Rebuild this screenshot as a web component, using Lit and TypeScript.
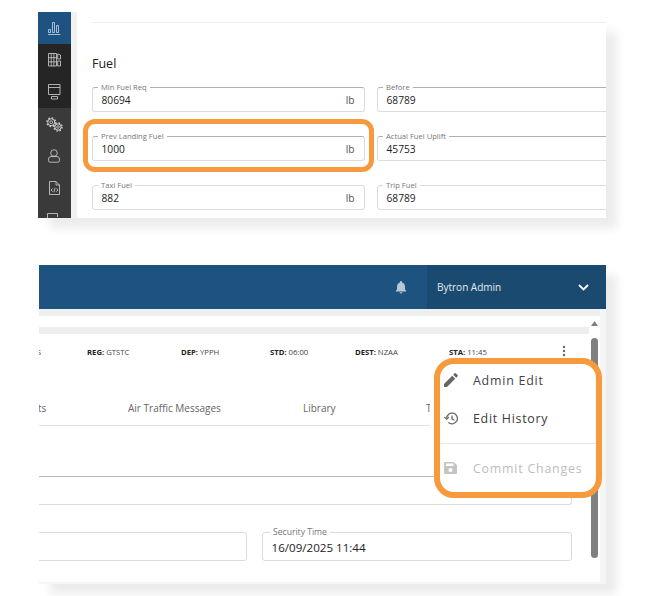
import { LitElement, html, css, svg } from "lit";
import { customElement } from "lit/decorators.js";

const ic = (w: number, h: number, body: unknown) =>
  html`<svg width=${w} height=${h} viewBox="0 0 ${w} ${h}" fill="none" stroke="currentColor" stroke-width=".8">${body}</svg>`;

const icons = {
  chart: ic(14, 14, svg`<path d="M1 13.5h12.5M1.5 11.5V8.5h2v3zM5.5 11.5V1.5h2v10zM9.5 11.5V4.5h2v7z"/>`),
  grid: ic(13, 14, svg`<path d="M.5.5h8v12.5h-8zM.5 4.7h8M.5 8.9h8M3.2.5V13M5.9.5V13M9.7 1l2.8 1v4H9.7zM9.7 8h2.8v5H9.7z"/>`),
  layout: ic(13, 16, svg`<path d="M.5.5h11.5v10H.5zM.5 3.5h11.5M3.5 12.5h6v2.5h-6z"/>`),
  gears: ic(17, 15, svg`<circle cx="5.2" cy="5.2" r="3.5" stroke-width="1"/><circle cx="5.2" cy="5.2" r="4.4" stroke-width="1.2" stroke-dasharray="1.7 1.75"/><circle cx="5.2" cy="5.2" r="1.4"/><circle cx="12" cy="10" r="3.2" stroke-width="1"/><circle cx="12" cy="10" r="4.1" stroke-width="1.2" stroke-dasharray="1.6 1.62"/><circle cx="12" cy="10" r="1.3"/>`),
  user: ic(12, 14, svg`<circle cx="6" cy="4" r="3.3"/><path d="M3 7.6H9a2.4 2.4 0 012.4 2.4v1.6a1.5 1.5 0 01-1.5 1.6H2.1a1.5 1.5 0 01-1.5-1.6V10A2.4 2.4 0 013 7.6z"/>`),
  code: ic(11, 14, svg`<path d="M.5.5h6.5l3.5 3.5v9.5H.5zM7 .5V4h3.5"/><path d="M3.6 7.4L2 9l1.6 1.6M7.4 7.4L9 9l-1.6 1.6M6 6.8L5 11.2" stroke-width=".8"/>`),
  doc: ic(14, 14, svg`<path d="M.5 12V.5h10V4M5 5.5h8.5v8H5z"/>`),
  bell: html`<svg width="12" height="13" viewBox="0 0 12 13" fill="#b9c6d4"><path d="M6 0a1 1 0 011 1v.6c2 .5 3 2.1 3 4.2v2.6l1.2 1.3v.7H.8v-.7L2 8.4V5.8c0-2.1 1-3.7 3-4.2V1a1 1 0 011-1zM4.6 11.2h2.8a1.4 1.4 0 01-2.8 0z"/></svg>`,
  chevron: html`<svg width="11" height="7" viewBox="0 0 11 7" fill="none" stroke="#fff" stroke-width="1.8"><path d="M1 1l4.5 4.5L10 1"/></svg>`,
  kebab: html`<svg width="4" height="12" viewBox="0 0 4 12" fill="#666"><circle cx="2" cy="2" r="1.2"/><circle cx="2" cy="6" r="1.2"/><circle cx="2" cy="10" r="1.2"/></svg>`,
  pencil: html`<svg width="14" height="14" viewBox="0 0 14 14" fill="#666"><path d="M0 11v3h3l8.2-8.2-3-3zM13.7 3.3a.8.8 0 000-1.1L11.8.3a.8.8 0 00-1.1 0L9.2 1.8l3 3z"/></svg>`,
  history: html`<svg width="15" height="13" viewBox="0 0 15 13" fill="none" stroke="#666" stroke-width="1.3"><path d="M2.6 6.5a5.4 5.4 0 111.7 3.9"/><path d="M.4 5l2.2 2.3L4.9 5" stroke-width="1.1"/><path d="M8 3.6v3.2l2.4 1.4"/></svg>`,
  save: html`<svg width="13" height="12" viewBox="0 0 13 12" fill="#c4c4c4"><path d="M0 1a1 1 0 011-1h8.6L13 3v8a1 1 0 01-1 1H1a1 1 0 01-1-1zM2 1.5V4h7.5V1.5zM6.5 6a2 2 0 100 4 2 2 0 000-4z"/></svg>`,
  up: html`<svg width="7" height="5" viewBox="0 0 7 5" fill="#808080"><path d="M3.5 0L7 5H0z"/></svg>`,
};

@customElement("app-root")
export class AppRoot extends LitElement {
  static styles = css`
    :host {
      display: block;
      width: 649px;
      height: 596px;
      background: #fff;
      overflow: hidden;
      font-family: "Open Sans", sans-serif;
      color: #333;
    }
    .page { display: flex; flex-direction: column; gap: 47px; padding: 22px 43px 0 38px; }

    .top {
      display: flex;
      height: 196px;
      box-shadow: 11px 10px 9px rgba(0, 0, 0, 0.08);
      background: #fff;
    }
    .side {
      width: 32.5px;
      flex: none;
      margin-top: -10px;
      height: 206px;
      background: #3a3a3a;
      overflow: hidden;
      color: #d4d4d4;
    }
    .side div { height: 32px; display: flex; align-items: center; justify-content: center; }
    .side .on { background: #1d5281; color: #c5d9ec; }
    .side .dark { background: #252525; }
    .gutter { width: 6.5px; flex: none; margin-top: -10px; background: #f0f2f2; }
    .main {
      flex: 1;
      min-width: 0;
      padding-left: 15px;
      overflow: hidden;
      position: relative;
    }
    .rule { height: 1px; background: #eeeeee; }
    h2 { margin: 32px 0 0; font-size: 12.5px; font-weight: 400; line-height: 17px; color: #222; }
    .fields {
      display: grid;
      grid-template-columns: 272.5px 240px;
      column-gap: 12.5px;
      row-gap: 23.5px;
      margin-top: 14.5px;
    }

    .field {
      position: relative;
      height: 25.5px;
      box-sizing: border-box;
      border: 1px solid #dcdcdc;
      border-radius: 3px;
      display: flex;
      align-items: center;
      justify-content: space-between;
      padding: 2px 9px 0 8.5px;
      font-size: 10.2px;
      color: #222;
    }
    .field.strong { border-top-color: #b0b0b0; }
    .field label {
      position: absolute;
      top: -5.5px;
      left: 5px;
      padding: 0 3px;
      background: #fff;
      font-size: 7.6px;
      line-height: 10px;
      color: #777;
    }
    .unit { color: #555; }
    .ring::after {
      content: "";
      position: absolute;
      left: -10.5px;
      right: -10px;
      top: -18px;
      bottom: -12px;
      border: 5.5px solid #f79a3e;
      border-radius: 12px;
      pointer-events: none;
    }

    .bottom {
      position: relative;
      margin-left: 1px;
      height: 319px;
      display: flex;
      flex-direction: column;
      box-shadow: 11px 10px 9px rgba(0, 0, 0, 0.08);
      background: #f4f5f5;
    }
    header {
      height: 44px;
      flex: none;
      background: #1e527f;
      display: flex;
      justify-content: flex-end;
      align-items: stretch;
    }
    .bell { display: flex; align-items: center; margin-right: 20px; }
    .user {
      width: 179px;
      background: #1a4a70;
      color: #e4ebf2;
      font-size: 10px;
      display: flex;
      align-items: center;
      justify-content: space-between;
      padding: 0 17px 0 10px;
      box-sizing: border-box;
    }
    .body {
      width: 561px;
      height: 273px;
      background: #fff;
      position: relative;
      overflow: hidden;
    }
    .strip { height: 7px; background: #eef0f0; }
    .bar { height: 7px; width: 550px; margin-top: 11px; background: #eeeeee; }
    .info {
      height: 36px;
      display: flex;
      align-items: center;
      font-size: 7.7px;
      color: #444;
    }
    .info span { flex: none; white-space: nowrap; }
    .info b { color: #222; font-weight: 700; }
    .clip { width: 48px; display: flex; justify-content: flex-end; overflow: hidden; }
    .clip i { font-style: normal; margin-right: 46px; }
    .kebab { margin-left: 101px; display: flex; margin-top: -3px; }
    .tabs {
      margin-top: 26px;
      height: 30px;
      width: 391px;
      box-sizing: border-box;
      border-bottom: 1px solid #e2e2e2;
      font-size: 10px;
      color: #666;
      display: flex;
      align-items: center;
      padding-bottom: 5px;
      white-space: nowrap;
      overflow: hidden;
    }
    .tabs span { flex: none; }
    .wide { margin: 50px 28px 0 -10px; height: 29px; border-top-color: #bbb; }
    .row2 {
      display: grid;
      grid-template-columns: 1fr 310px;
      column-gap: 15px;
      margin: 27px 28px 0 -10px;
    }
    .row2 .field { height: 29px; font-size: 11.6px; color: #222; }
    .row2 label { font-size: 8.6px; left: 7px; top: -6px; color: #777; }

    .scroll {
      position: absolute;
      left: 551.5px;
      top: 12px;
      width: 7px;
      height: 250px;
      display: flex;
      flex-direction: column;
      align-items: center;
      gap: 12px;
    }
    .thumb { width: 7px; height: 220px; border-radius: 3.5px; background: #808080; flex: none; }

    .menu {
      position: absolute;
      left: 395px;
      top: 93px;
      width: 168px;
      height: 140px;
      box-sizing: border-box;
      border: 6px solid #f79a3e;
      border-radius: 20px;
      background: #fff;
      display: flex;
      flex-direction: column;
    }
    .item {
      height: 32px;
      flex: none;
      display: flex;
      align-items: center;
      padding-left: 4px;
      font-size: 12.4px;
      letter-spacing: 0.78px;
      color: #444;
      white-space: nowrap;
    }
    .item .i { width: 29px; flex: none; display: flex; align-items: center; }
    .item + .item { margin-top: 6px; }
    .item.hist { font-weight: 500; color: #3a3a3a; letter-spacing: 0.72px; }
    .item.off { color: #bdbdbd; margin-top: 8px; }
    .sep { height: 1px; background: #e8e8e8; margin-top: 9px; flex: none; }
  `;

  render() {
    return html`
      <div class="page">
        <section class="top">
          <nav class="side">
            <div class="on">${icons.chart}</div>
            <div class="dark">${icons.grid}</div>
            <div class="dark">${icons.layout}</div>
            <div>${icons.gears}</div>
            <div>${icons.user}</div>
            <div>${icons.code}</div>
            <div>${icons.doc}</div>
          </nav>
          <div class="gutter"></div>
          <div class="main">
            <div class="rule"></div>
            <h2>Fuel</h2>
            <div class="fields">
              <div class="field strong"><label>Min Fuel Req</label><span>80694</span><span class="unit">lb</span></div>
              <div class="field strong"><label>Before</label><span>68789</span></div>
              <div class="field strong ring"><label>Prev Landing Fuel</label><span>1000</span><span class="unit">lb</span></div>
              <div class="field strong"><label>Actual Fuel Uplift</label><span>45753</span></div>
              <div class="field"><label>Taxi Fuel</label><span>882</span><span class="unit">lb</span></div>
              <div class="field"><label>Trip Fuel</label><span>68789</span></div>
            </div>
          </div>
        </section>

        <section class="bottom">
          <header>
            <div class="bell">${icons.bell}</div>
            <div class="user"><span>Bytron Admin</span>${icons.chevron}</div>
          </header>
          <div class="body">
            <div class="strip"></div>
            <div class="bar"></div>
            <div class="info">
              <span class="clip"><i>S</i></span>
              <span style="width:94px"><b>REG:</b> GTSTC</span>
              <span style="width:89px"><b>DEP:</b> YPPH</span>
              <span style="width:85px"><b>STD:</b> 06:00</span>
              <span style="width:94px"><b>DEST:</b> NZAA</span>
              <span style="width:12px"><b>STA:</b> 11:45</span>
              <span class="kebab">${icons.kebab}</span>
            </div>
            <div class="tabs">
              <span style="margin-left:-1px;width:90px">ts</span>
              <span style="width:175px">Air Traffic Messages</span>
              <span style="width:123px">Library</span>
              <span>T</span>
            </div>
            <div class="field wide"></div>
            <div class="row2">
              <div class="field"></div>
              <div class="field"><label>Security Time</label><span>16/09/2025 11:44</span></div>
            </div>
            <div class="scroll">${icons.up}<div class="thumb"></div></div>
          </div>
          <div class="menu">
            <div class="item"><span class="i">${icons.pencil}</span>Admin Edit</div>
            <div class="item hist"><span class="i">${icons.history}</span>Edit History</div>
            <div class="sep"></div>
            <div class="item off"><span class="i">${icons.save}</span>Commit Changes</div>
          </div>
        </section>
      </div>
    `;
  }
}
